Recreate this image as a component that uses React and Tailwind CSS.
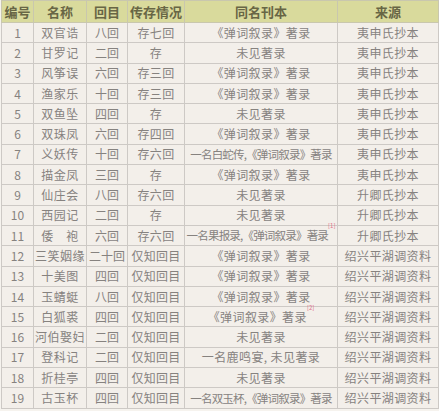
import React from 'react';

const rows = [
    ['1', '双官诰', '八回', '存七回', '《弹词叙录》著录', '夷申氏抄本'],
    ['2', '甘罗记', '二回', '存', '未见著录', '夷申氏抄本'],
    ['3', '风筝误', '六回', '存三回', '《弹词叙录》著录', '夷申氏抄本'],
    ['4', '渔家乐', '十回', '存三回', '《弹词叙录》著录', '夷申氏抄本'],
    ['5', '双鱼坠', '四回', '存', '未见著录', '夷申氏抄本'],
    ['6', '双珠凤', '六回', '存四回', '《弹词叙录》著录', '夷申氏抄本'],
    ['7', '义妖传', '十回', '存六回', '一名白蛇传,《弹词叙录》著录', '夷申氏抄本', 'tight'],
    ['8', '描金凤', '三回', '存', '《弹词叙录》著录', '夷申氏抄本'],
    ['9', '仙庄会', '八回', '存六回', '未见著录', '升卿氏抄本'],
    ['10', '西园记', '二回', '存', '未见著录', '升卿氏抄本'],
    ['11', '倭\u3000袍', '六回', '存六回', '一名果报录,《弹词叙录》著录', '升卿氏抄本', 'tight', '[1]'],
    ['12', '三笑姻缘', '二十回', '仅知回目', '《弹词叙录》著录', '绍兴平湖调资料'],
    ['13', '十美图', '四回', '仅知回目', '《弹词叙录》著录', '绍兴平湖调资料'],
    ['14', '玉蜻蜓', '八回', '仅知回目', '《弹词叙录》著录', '绍兴平湖调资料'],
    ['15', '白狐裘', '四回', '仅知回目', '《弹词叙录》著录', '绍兴平湖调资料', null, '[2]'],
    ['16', '河伯娶妇', '二回', '仅知回目', '未见著录', '绍兴平湖调资料'],
    ['17', '登科记', '二回', '仅知回目', '一名鹿鸣宴, 未见著录', '绍兴平湖调资料'],
    ['18', '折桂亭', '四回', '仅知回目', '未见著录', '绍兴平湖调资料'],
    ['19', '古玉杯', '四回', '仅知回目', '一名双玉杯,《弹词叙录》著录', '绍兴平湖调资料', 'tight'],
];

const headers = ['编号', '名称', '回目', '传存情况', '同名刊本', '来源'];

export default function App() {
    return (
        <div className="w-[439px] h-[411px] bg-[#f6f3ee] overflow-hidden" style={{ fontFamily: '"Noto Sans CJK SC", "Noto Sans", sans-serif' }}>
            <table className="table-fixed border-collapse w-[437px] ml-[1px] text-center">
                <colgroup>
                    <col className="w-[32px]" />
                    <col className="w-[53px]" />
                    <col className="w-[41px]" />
                    <col className="w-[57px]" />
                    <col className="w-[153px]" />
                    <col className="w-[101px]" />
                </colgroup>
                <thead>
                    <tr className="h-[22px] bg-[#d9da9c]">
                        {headers.map((h) => (
                            <th key={h} className="border border-[#c9c7ae] p-0 text-[13px] font-bold text-[#686645] leading-none">
                                {h}
                            </th>
                        ))}
                    </tr>
                </thead>
                <tbody className="bg-[#f3efea] text-[#86827f] text-[12px] leading-none">
                    {rows.map((r) => (
                        <tr key={r[0]} className="h-[20.3px]">
                            <td className="border border-[#cdc9c5] p-0">{r[0]}</td>
                            <td className="border border-[#cdc9c5] p-0 whitespace-nowrap tracking-[0.5px]">{r[1]}</td>
                            <td className="border border-[#cdc9c5] p-0 whitespace-nowrap">{r[2]}</td>
                            <td className="border border-[#cdc9c5] p-0 whitespace-nowrap tracking-[0.3px]">{r[3]}</td>
                            <td className="border border-[#cdc9c5] p-0 whitespace-nowrap overflow-visible">
                                <span className={r[6] === 'tight' ? 'text-[11.5px] tracking-[-0.8px]' : 'tracking-[0.4px]'}>{r[4]}</span>
                                {r[7] && <sup className="text-[6px] text-[#e0708a] align-top">{r[7]}</sup>}
                            </td>
                            <td className="border border-[#cdc9c5] p-0 whitespace-nowrap tracking-[0.4px]">{r[5]}</td>
                        </tr>
                    ))}
                </tbody>
            </table>
        </div>
    );
}
